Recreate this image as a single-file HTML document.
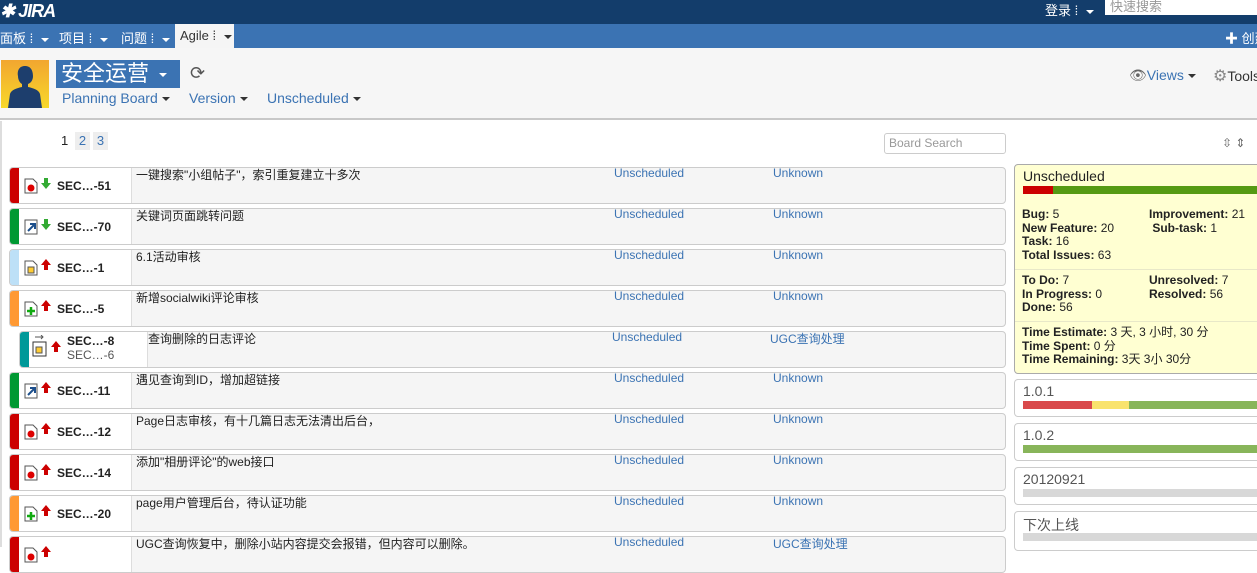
<!DOCTYPE html>
<html><head><meta charset="utf-8"><style>
*{margin:0;padding:0;box-sizing:border-box}
body{width:1257px;height:547px;overflow:hidden;position:relative;background:#fff;font-family:"Liberation Sans","Noto Sans CJK SC",sans-serif;font-size:12px;color:#333}
.a{position:absolute;white-space:nowrap}
.top{left:0;top:0;width:1257px;height:24px;background:#133d6b}
.nav{left:0;top:24px;width:1257px;height:24px;background:#3b73b3;color:#fff;font-size:13px}
.nav span{position:absolute;top:4px}
.hdr{left:0;top:48px;width:1257px;height:72px;background:#f6f6f6;border-bottom:2px solid #c8c8c8}
.tri{display:inline-block;width:0;height:0;border-left:4px solid transparent;border-right:4px solid transparent;border-top:4px solid currentColor;vertical-align:middle;margin-left:4px}
.row{left:9px;width:997px;height:37px;border:1px solid #ccc;border-radius:4px;background:#f5f5f5;overflow:hidden}
.row .bar{position:absolute;left:0;top:0;bottom:0;width:9px}
.row .w{position:absolute;left:9px;top:0;bottom:0;width:113px;background:#fff;border-right:1px solid #ddd}
.row .key{position:absolute;left:47px;top:11px;font-weight:bold;font-size:12px;color:#222}
.row .sum{position:absolute;left:126px;top:-2px;font-size:12px;color:#222}
.row .v{position:absolute;left:604px;top:-2px;color:#3b73b3;font-size:12px}
.row .c{position:absolute;left:763px;top:-2px;color:#3b73b3;font-size:12px}
.row svg{position:absolute}
.vb{left:1014px;width:250px;border:1px solid #ccc;border-radius:4px;background:#fff}
.vb .t{position:absolute;left:8px;top:3px;font-size:14px;color:#555}
.vb .b{position:absolute;left:8px;top:22px;height:7px;right:0}
.st{font-size:12px;line-height:13.5px;color:#222}
</style></head><body>
<div class="a top"></div>
<div class="a" style="left:0;top:1px;color:#fff;font-weight:bold;font-size:18px;font-style:italic;letter-spacing:-1px">✱ JIRA</div>
<div class="a" style="left:1045px;top:0;color:#fff;font-size:13px">登录 ⁞ <span class="tri" style="color:#fff"></span></div>
<div class="a" style="left:1105px;top:0;width:152px;height:15px;background:#fff;color:#999;font-size:13px;padding-left:5px;line-height:14px">快速搜索</div>
<div class="a nav">
<span style="left:0">面板 ⁞ <i class="tri"></i></span>
<span style="left:59px">项目 ⁞ <i class="tri"></i></span>
<span style="left:121px">问题 ⁞ <i class="tri"></i></span>
<div style="position:absolute;left:175px;top:0;width:59px;height:24px;background:#f5f5f5;color:#333"><span style="position:absolute;left:5px;top:4px">Agile ⁞ <i class="tri"></i></span></div>
<span style="left:1225px">✚ 创建</span>
</div>
<div class="a hdr"></div>
<div class="a" style="left:1px;top:60px;width:48px;height:48px;background:linear-gradient(#f2a630,#f7d82a)">
<svg width="48" height="48"><path d="M24 6c-6 0-8 5-7 10 0 4 2 7 4 8v3c-5 1-11 3-12 7l-2 14h34l-2-14c-1-4-7-6-12-7v-3c3-1 5-4 5-8 0-5-2-10-8-10z" fill="#1d3e6d"/></svg></div>
<div class="a" style="left:56px;top:60px;width:124px;height:28px;background:#3b73b3;color:#fff;font-size:22px;line-height:28px;padding-left:5px">安全运营 <i class="tri" style="color:#fff"></i></div>
<div class="a" style="left:190px;top:63px;font-size:18px;color:#555">⟳</div>
<div class="a" style="left:62px;top:90px;font-size:14px;color:#3b73b3">Planning Board<i class="tri" style="color:#333"></i></div>
<div class="a" style="left:189px;top:90px;font-size:14px;color:#3b73b3">Version<i class="tri" style="color:#333"></i></div>
<div class="a" style="left:267px;top:90px;font-size:14px;color:#3b73b3">Unscheduled<i class="tri" style="color:#333"></i></div>
<div class="a" style="left:1129px;top:67px;font-size:14px;color:#3b73b3"><span style="color:#666">👁</span>Views<i class="tri" style="color:#333"></i></div>
<div class="a" style="left:1213px;top:66px;font-size:14px;color:#333"><span style="color:#888;font-size:16px">⚙</span>Tools</div>
<div class="a" style="left:0;top:121px;width:2px;height:426px;background:#ddd"></div>
<div class="a" style="left:61px;top:133px;font-size:13px;color:#222">1</div>
<div class="a" style="left:75px;top:132px;width:15px;height:18px;background:#eee;color:#3b73b3;font-size:13px;text-align:center;line-height:18px">2</div>
<div class="a" style="left:93px;top:132px;width:15px;height:18px;background:#eee;color:#3b73b3;font-size:13px;text-align:center;line-height:18px">3</div>
<div class="a" style="left:884px;top:133px;width:122px;height:21px;border:1px solid #ccc;border-radius:3px;color:#999;font-size:12px;padding:2px 4px">Board Search</div>
<div class="a" style="left:1222px;top:136px;color:#666;font-size:12px">⇳ ⇕</div>

<div class="a row" style="top:167px"><div class="bar" style="background:#c00"></div><div class="w"></div>
<svg style="left:14px;top:10px" width="14" height="16"><path d="M1 1h8l4 4v10H1z" fill="#fff" stroke="#555"/><circle cx="7" cy="10" r="3.5" fill="#d00"/></svg>
<svg style="left:31px;top:10px" width="10" height="11"><path d="M3 0h4v5h3L5 11 0 5h3z" fill="#3a3"/></svg>
<div class="key">SEC…-51</div><div class="sum">一键搜索"小组帖子"，索引重复建立十多次</div><div class="v">Unscheduled</div><div class="c">Unknown</div></div>

<div class="a row" style="top:208px"><div class="bar" style="background:#093"></div><div class="w"></div>
<svg style="left:14px;top:10px" width="14" height="16"><rect x="1" y="1" width="12" height="14" fill="#fff" stroke="#555"/><path d="M4 12l6-6M6 5h5v5" stroke="#1d4f8c" stroke-width="2" fill="none"/></svg>
<svg style="left:31px;top:10px" width="10" height="11"><path d="M3 0h4v5h3L5 11 0 5h3z" fill="#3a3"/></svg>
<div class="key">SEC…-70</div><div class="sum">关键词页面跳转问题</div><div class="v">Unscheduled</div><div class="c">Unknown</div></div>

<div class="a row" style="top:249px"><div class="bar" style="background:#bde0f7"></div><div class="w"></div>
<svg style="left:14px;top:10px" width="14" height="16"><path d="M1 1h8l4 4v10H1z" fill="#fff" stroke="#555"/><rect x="4" y="7" width="6" height="6" fill="#fc3" stroke="#555"/></svg>
<svg style="left:31px;top:9px" width="10" height="11"><path d="M3 11h4V6h3L5 0 0 6h3z" fill="#c00"/></svg>
<div class="key">SEC…-1</div><div class="sum">6.1活动审核</div><div class="v">Unscheduled</div><div class="c">Unknown</div></div>

<div class="a row" style="top:290px"><div class="bar" style="background:#f93"></div><div class="w"></div>
<svg style="left:14px;top:10px" width="14" height="16"><path d="M1 1h8l4 4v10H1z" fill="#fff" stroke="#555"/><path d="M7 6v8M3 10h8" stroke="#1a1" stroke-width="2.5"/></svg>
<svg style="left:31px;top:9px" width="10" height="11"><path d="M3 11h4V6h3L5 0 0 6h3z" fill="#c00"/></svg>
<div class="key">SEC…-5</div><div class="sum">新增socialwiki评论审核</div><div class="v">Unscheduled</div><div class="c">Unknown</div></div>

<div class="a row" style="top:331px;left:19px;width:987px"><div class="bar" style="background:#099"></div><div class="w" style="width:119px"></div>
<svg style="left:12px;top:3px" width="16" height="22"><path d="M3 2h8M9 0l2 2-2 2" stroke="#555" fill="none"/><rect x="1" y="7" width="13" height="14" fill="#fff" stroke="#333"/><rect x="4" y="12" width="6" height="6" fill="#fc3" stroke="#555"/></svg>
<svg style="left:31px;top:9px" width="10" height="11"><path d="M3 11h4V6h3L5 0 0 6h3z" fill="#c00"/></svg>
<div class="key" style="top:2px">SEC…-8</div><div class="key" style="top:16px;font-weight:normal;color:#555">SEC…-6</div>
<div class="sum" style="left:128px">查询删除的日志评论</div><div class="v" style="left:592px">Unscheduled</div><div class="c" style="left:750px">UGC查询处理</div></div>

<div class="a row" style="top:372px"><div class="bar" style="background:#093"></div><div class="w"></div>
<svg style="left:14px;top:10px" width="14" height="16"><rect x="1" y="1" width="12" height="14" fill="#fff" stroke="#555"/><path d="M4 12l6-6M6 5h5v5" stroke="#1d4f8c" stroke-width="2" fill="none"/></svg>
<svg style="left:31px;top:9px" width="10" height="11"><path d="M3 11h4V6h3L5 0 0 6h3z" fill="#c00"/></svg>
<div class="key">SEC…-11</div><div class="sum">遇见查询到ID，增加超链接</div><div class="v">Unscheduled</div><div class="c">Unknown</div></div>

<div class="a row" style="top:413px"><div class="bar" style="background:#c00"></div><div class="w"></div>
<svg style="left:14px;top:10px" width="14" height="16"><path d="M1 1h8l4 4v10H1z" fill="#fff" stroke="#555"/><circle cx="7" cy="10" r="3.5" fill="#d00"/></svg>
<svg style="left:31px;top:9px" width="10" height="11"><path d="M3 11h4V6h3L5 0 0 6h3z" fill="#c00"/></svg>
<div class="key">SEC…-12</div><div class="sum">Page日志审核，有十几篇日志无法清出后台，</div><div class="v">Unscheduled</div><div class="c">Unknown</div></div>

<div class="a row" style="top:454px"><div class="bar" style="background:#c00"></div><div class="w"></div>
<svg style="left:14px;top:10px" width="14" height="16"><path d="M1 1h8l4 4v10H1z" fill="#fff" stroke="#555"/><circle cx="7" cy="10" r="3.5" fill="#d00"/></svg>
<svg style="left:31px;top:9px" width="10" height="11"><path d="M3 11h4V6h3L5 0 0 6h3z" fill="#c00"/></svg>
<div class="key">SEC…-14</div><div class="sum">添加"相册评论"的web接口</div><div class="v">Unscheduled</div><div class="c">Unknown</div></div>

<div class="a row" style="top:495px"><div class="bar" style="background:#f93"></div><div class="w"></div>
<svg style="left:14px;top:10px" width="14" height="16"><path d="M1 1h8l4 4v10H1z" fill="#fff" stroke="#555"/><path d="M7 6v8M3 10h8" stroke="#1a1" stroke-width="2.5"/></svg>
<svg style="left:31px;top:9px" width="10" height="11"><path d="M3 11h4V6h3L5 0 0 6h3z" fill="#c00"/></svg>
<div class="key">SEC…-20</div><div class="sum">page用户管理后台，待认证功能</div><div class="v">Unscheduled</div><div class="c">Unknown</div></div>

<div class="a row" style="top:536px"><div class="bar" style="background:#c00"></div><div class="w"></div>
<svg style="left:14px;top:10px" width="14" height="16"><path d="M1 1h8l4 4v10H1z" fill="#fff" stroke="#555"/><circle cx="7" cy="10" r="3.5" fill="#d00"/></svg>
<svg style="left:31px;top:9px" width="10" height="11"><path d="M3 11h4V6h3L5 0 0 6h3z" fill="#c00"/></svg>
<div class="sum">UGC查询恢复中，删除小站内容提交会报错，但内容可以删除。</div><div class="v">Unscheduled</div><div class="c">UGC查询处理</div></div>

<div class="a vb" style="top:164px;height:210px;background:#ffffd2;border-color:#aaa">
<div class="t" style="color:#222;top:3px">Unscheduled</div>
<div class="b" style="top:21px;height:8px;background:#559a13"><div style="width:30px;height:8px;background:#c00"></div></div>
<div class="a st" style="left:7px;top:43px"><b>Bug:</b> 5<br><b>New Feature:</b> 20<br><b>Task:</b> 16<br><b>Total Issues:</b> 63</div>
<div class="a st" style="left:134px;top:43px"><b>Improvement:</b> 21<br>&nbsp;<b>Sub-task:</b> 1</div>
<div class="a" style="left:0;top:104px;width:250px;border-top:1px solid #e8e8c8"></div>
<div class="a st" style="left:7px;top:109px"><b>To Do:</b> 7<br><b>In Progress:</b> 0<br><b>Done:</b> 56</div>
<div class="a st" style="left:134px;top:109px"><b>Unresolved:</b> 7<br><b>Resolved:</b> 56</div>
<div class="a" style="left:0;top:156px;width:250px;border-top:1px solid #e8e8c8"></div>
<div class="a st" style="left:7px;top:161px"><b>Time Estimate:</b> 3 天, 3 小时, 30 分<br><b>Time Spent:</b> 0 分<br><b>Time Remaining:</b> 3天 3小 30分</div>
</div>
<div class="a vb" style="top:379px;height:38px"><div class="t">1.0.1</div><div class="b" style="top:21px;height:8px;background:#88b55a"><div style="float:left;width:69px;height:8px;background:#d9494b"></div><div style="float:left;width:37px;height:8px;background:#f9e36d"></div></div></div>
<div class="a vb" style="top:423px;height:38px"><div class="t">1.0.2</div><div class="b" style="top:21px;height:8px;background:#88b55a"></div></div>
<div class="a vb" style="top:467px;height:38px"><div class="t">20120921</div><div class="b" style="top:21px;height:8px;background:#d8d8d8"></div></div>
<div class="a vb" style="top:511px;height:40px"><div class="t">下次上线</div><div class="b" style="top:21px;height:8px;background:#d8d8d8"></div></div>
</body></html>
